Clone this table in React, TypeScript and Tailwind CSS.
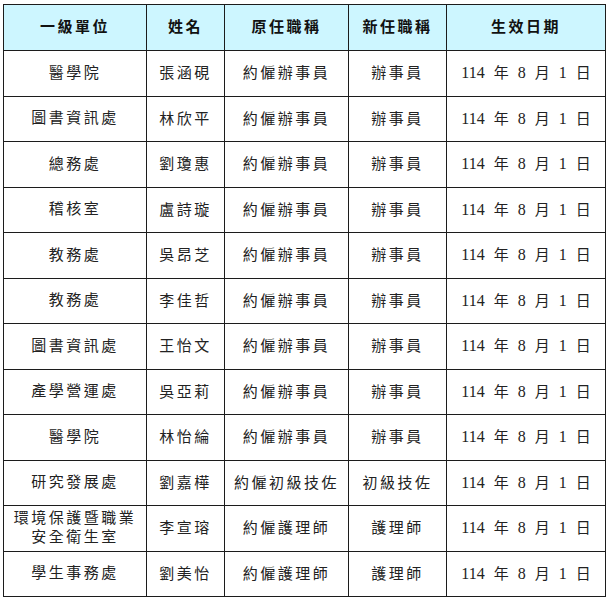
import React from 'react';

type Row = {
  unit: string[];
  name: string;
  oldTitle: string;
  newTitle: string;
};

const rows: Row[] = [
  { unit: ['醫學院'], name: '張涵硯', oldTitle: '約僱辦事員', newTitle: '辦事員' },
  { unit: ['圖書資訊處'], name: '林欣平', oldTitle: '約僱辦事員', newTitle: '辦事員' },
  { unit: ['總務處'], name: '劉瓊惠', oldTitle: '約僱辦事員', newTitle: '辦事員' },
  { unit: ['稽核室'], name: '盧詩璇', oldTitle: '約僱辦事員', newTitle: '辦事員' },
  { unit: ['教務處'], name: '吳昂芝', oldTitle: '約僱辦事員', newTitle: '辦事員' },
  { unit: ['教務處'], name: '李佳哲', oldTitle: '約僱辦事員', newTitle: '辦事員' },
  { unit: ['圖書資訊處'], name: '王怡文', oldTitle: '約僱辦事員', newTitle: '辦事員' },
  { unit: ['產學營運處'], name: '吳亞莉', oldTitle: '約僱辦事員', newTitle: '辦事員' },
  { unit: ['醫學院'], name: '林怡綸', oldTitle: '約僱辦事員', newTitle: '辦事員' },
  { unit: ['研究發展處'], name: '劉嘉樺', oldTitle: '約僱初級技佐', newTitle: '初級技佐' },
  { unit: ['環境保護暨職業', '安全衛生室'], name: '李宣瑢', oldTitle: '約僱護理師', newTitle: '護理師' },
  { unit: ['學生事務處'], name: '劉美怡', oldTitle: '約僱護理師', newTitle: '護理師' },
];

const cjk = "font-['Liberation_Serif','Noto_Sans_CJK_TC',serif]";
const cell = 'border-[1.5px] border-[#1c1c1c] text-center align-middle p-0';

const DateText = () => (
  <span className="inline-flex items-baseline gap-[9px] text-[16px] text-[#222]">
    <span>114</span>
    <span className="text-[15px]">年</span>
    <span>8</span>
    <span className="text-[15px]">月</span>
    <span>1</span>
    <span className="text-[15px]">日</span>
  </span>
);

export default function App() {
  return (
    <div className={`w-[612px] h-[600px] bg-white pl-[3px] pt-[4px] ${cjk}`}>
      <table className="table-fixed border-collapse w-[602px]">
        <colgroup>
          <col className="w-[143px]" />
          <col className="w-[78px]" />
          <col className="w-[124px]" />
          <col className="w-[98px]" />
          <col className="w-[159px]" />
        </colgroup>
        <thead>
          <tr className="h-[46px] bg-[#cdf6ff]">
            {['一級單位', '姓名', '原任職稱', '新任職稱', '生效日期'].map((h) => (
              <th key={h} className={`${cell} text-[15px] font-bold tracking-[2.5px] text-[#111]`}>
                {h}
              </th>
            ))}
          </tr>
        </thead>
        <tbody>
          {rows.map((r, i) => (
            <tr key={i} className="h-[45.5px]">
              <td className={`${cell} text-[15px] tracking-[2.5px] text-[#222] leading-[19px]`}>
                {r.unit.map((u) => (
                  <div key={u}>{u}</div>
                ))}
              </td>
              <td className={`${cell} text-[15px] tracking-[2.5px] text-[#222]`}>{r.name}</td>
              <td className={`${cell} text-[15px] tracking-[2.5px] text-[#222]`}>{r.oldTitle}</td>
              <td className={`${cell} text-[15px] tracking-[2.5px] text-[#222]`}>{r.newTitle}</td>
              <td className={`${cell}`}>
                <DateText />
              </td>
            </tr>
          ))}
        </tbody>
      </table>
    </div>
  );
}
